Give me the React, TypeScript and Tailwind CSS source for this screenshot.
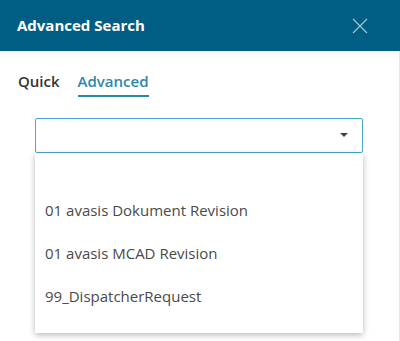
import React from 'react';

const items = ['', '01 avasis Dokument Revision', '01 avasis MCAD Revision', '99_DispatcherRequest'];

export default function App(): JSX.Element {
  return (
    <div
      className="relative h-[341px] w-[400px] overflow-hidden bg-white"
      style={{ fontFamily: '"Open Sans", "Noto Sans", sans-serif' }}
    >
      {/* Header */}
      <div className="flex h-[51px] items-center justify-between bg-[#005e85] pl-[17px] pr-[32px]">
        <h1 className="text-[15px] font-bold text-white">Advanced Search</h1>
        <svg width="16" height="16" viewBox="0 0 16 16" aria-hidden="true">
          <path d="M1 1L15 15M15 1L1 15" stroke="#a3c4d4" strokeWidth="1.2" />
        </svg>
      </div>

      <div className="h-[290px] border-r border-[#e6e6e6]">
        {/* Tabs */}
        <div className="flex gap-[18px] px-[18px] pt-[19px]">
          <div className="pb-[2px] text-[15px] font-semibold text-[#333]">Quick</div>
          <div className="border-b-2 border-[#2c87ad] pb-[2px] text-[15px] font-semibold text-[#2c87ad]">
            Advanced
          </div>
        </div>

        {/* Select */}
        <div className="mt-[21px] ml-[35px] w-[328px]">
          <div className="flex h-[35px] items-center justify-end rounded-[2px] border border-[#4aa7d2] pr-[14px]">
            <svg width="8" height="4" viewBox="0 0 8 4" aria-hidden="true">
              <path d="M0 0H8L4 4Z" fill="#444" />
            </svg>
          </div>
          <div className="h-[180px] bg-white shadow-[0_2px_6px_rgba(0,0,0,0.28)]">
            {items.map((label, i) => (
              <div
                key={i}
                className={`flex items-center px-[10px] text-[15px] text-[#4a4a4a] ${i === 0 ? 'h-[36px]' : 'h-[43px]'}`}
              >
                {label}
              </div>
            ))}
          </div>
        </div>
      </div>
    </div>
  );
}
